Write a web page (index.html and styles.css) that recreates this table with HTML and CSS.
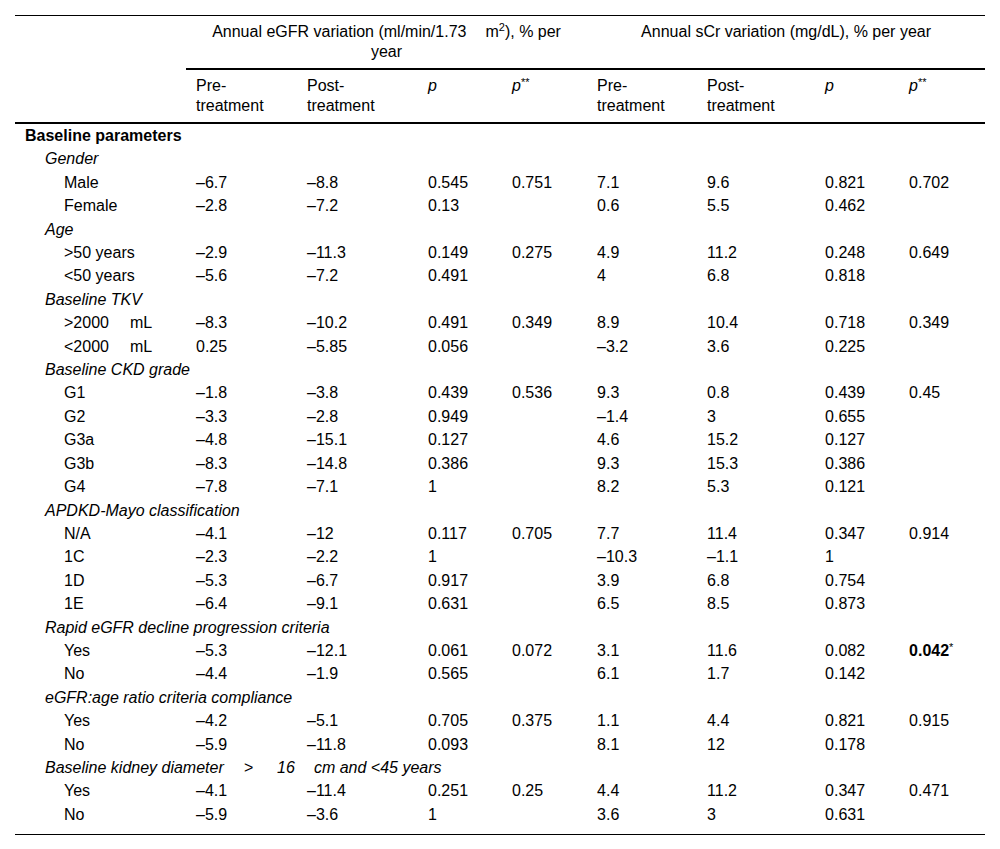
FILE: index.html
```html
<!DOCTYPE html>
<html>
<head>
<meta charset="utf-8">
<link rel="stylesheet" href="styles.css">
</head>
<body>
<table class="tbl">
  <colgroup>
    <col class="c-label"><col class="c1"><col class="c2"><col class="c3"><col class="c4"><col class="c5"><col class="c6"><col class="c7"><col class="c8">
  </colgroup>
  <thead>
    <tr class="hrow1">
      <th rowspan="2" class="blank"></th>
      <th colspan="4" class="grp">Annual eGFR variation (ml/min/1.73<span class="gap-h"></span>m<sup>2</sup>), % per<br>year</th>
      <th colspan="4" class="grp">Annual sCr variation (mg/dL), % per year</th>
    </tr>
    <tr class="hrow2">
      <th>Pre-<br>treatment</th>
      <th>Post-<br>treatment</th>
      <th><i>p</i></th>
      <th><i>p</i><sup class="ast">**</sup></th>
      <th>Pre-<br>treatment</th>
      <th>Post-<br>treatment</th>
      <th><i>p</i></th>
      <th><i>p</i><sup class="ast">**</sup></th>
    </tr>
  </thead>
  <tbody>
    <tr><td class="sec" colspan="9">Baseline parameters</td></tr>
    <tr><td class="grpl" colspan="9">Gender</td></tr>
    <tr><td class="item">Male</td><td>–6.7</td><td>–8.8</td><td>0.545</td><td>0.751</td><td>7.1</td><td>9.6</td><td>0.821</td><td>0.702</td></tr>
    <tr><td class="item">Female</td><td>–2.8</td><td>–7.2</td><td>0.13</td><td></td><td>0.6</td><td>5.5</td><td>0.462</td><td></td></tr>
    <tr><td class="grpl" colspan="9">Age</td></tr>
    <tr><td class="item">&gt;50 years</td><td>–2.9</td><td>–11.3</td><td>0.149</td><td>0.275</td><td>4.9</td><td>11.2</td><td>0.248</td><td>0.649</td></tr>
    <tr><td class="item">&lt;50 years</td><td>–5.6</td><td>–7.2</td><td>0.491</td><td></td><td>4</td><td>6.8</td><td>0.818</td><td></td></tr>
    <tr><td class="grpl" colspan="9">Baseline TKV</td></tr>
    <tr><td class="item">&gt;2000<span class="gap-ml"></span>mL</td><td>–8.3</td><td>–10.2</td><td>0.491</td><td>0.349</td><td>8.9</td><td>10.4</td><td>0.718</td><td>0.349</td></tr>
    <tr><td class="item">&lt;2000<span class="gap-ml"></span>mL</td><td>0.25</td><td>–5.85</td><td>0.056</td><td></td><td>–3.2</td><td>3.6</td><td>0.225</td><td></td></tr>
    <tr><td class="grpl" colspan="9">Baseline CKD grade</td></tr>
    <tr><td class="item">G1</td><td>–1.8</td><td>–3.8</td><td>0.439</td><td>0.536</td><td>9.3</td><td>0.8</td><td>0.439</td><td>0.45</td></tr>
    <tr><td class="item">G2</td><td>–3.3</td><td>–2.8</td><td>0.949</td><td></td><td>–1.4</td><td>3</td><td>0.655</td><td></td></tr>
    <tr><td class="item">G3a</td><td>–4.8</td><td>–15.1</td><td>0.127</td><td></td><td>4.6</td><td>15.2</td><td>0.127</td><td></td></tr>
    <tr><td class="item">G3b</td><td>–8.3</td><td>–14.8</td><td>0.386</td><td></td><td>9.3</td><td>15.3</td><td>0.386</td><td></td></tr>
    <tr><td class="item">G4</td><td>–7.8</td><td>–7.1</td><td>1</td><td></td><td>8.2</td><td>5.3</td><td>0.121</td><td></td></tr>
    <tr><td class="grpl" colspan="9">APDKD-Mayo classification</td></tr>
    <tr><td class="item">N/A</td><td>–4.1</td><td>–12</td><td>0.117</td><td>0.705</td><td>7.7</td><td>11.4</td><td>0.347</td><td>0.914</td></tr>
    <tr><td class="item">1C</td><td>–2.3</td><td>–2.2</td><td>1</td><td></td><td>–10.3</td><td>–1.1</td><td>1</td><td></td></tr>
    <tr><td class="item">1D</td><td>–5.3</td><td>–6.7</td><td>0.917</td><td></td><td>3.9</td><td>6.8</td><td>0.754</td><td></td></tr>
    <tr><td class="item">1E</td><td>–6.4</td><td>–9.1</td><td>0.631</td><td></td><td>6.5</td><td>8.5</td><td>0.873</td><td></td></tr>
    <tr><td class="grpl" colspan="9">Rapid eGFR decline progression criteria</td></tr>
    <tr><td class="item">Yes</td><td>–5.3</td><td>–12.1</td><td>0.061</td><td>0.072</td><td>3.1</td><td>11.6</td><td>0.082</td><td><b>0.042</b><sup class="ast">*</sup></td></tr>
    <tr><td class="item">No</td><td>–4.4</td><td>–1.9</td><td>0.565</td><td></td><td>6.1</td><td>1.7</td><td>0.142</td><td></td></tr>
    <tr><td class="grpl" colspan="9">eGFR:age ratio criteria compliance</td></tr>
    <tr><td class="item">Yes</td><td>–4.2</td><td>–5.1</td><td>0.705</td><td>0.375</td><td>1.1</td><td>4.4</td><td>0.821</td><td>0.915</td></tr>
    <tr><td class="item">No</td><td>–5.9</td><td>–11.8</td><td>0.093</td><td></td><td>8.1</td><td>12</td><td>0.178</td><td></td></tr>
    <tr><td class="grpl" colspan="9">Baseline kidney diameter<span class="gap-a"></span>&gt;<span class="gap-b"></span>16<span class="gap-c"></span>cm and &lt;45 years</td></tr>
    <tr><td class="item">Yes</td><td>–4.1</td><td>–11.4</td><td>0.251</td><td>0.25</td><td>4.4</td><td>11.2</td><td>0.347</td><td>0.471</td></tr>
    <tr class="last"><td class="item">No</td><td>–5.9</td><td>–3.6</td><td>1</td><td></td><td>3.6</td><td>3</td><td>0.631</td><td></td></tr>
  </tbody>
</table>
</body>
</html>
```

FILE: styles.css
```css
html, body {
  margin: 0;
  padding: 0;
  background: #fff;
}
body {
  font-family: "Liberation Sans", Arial, sans-serif;
  font-size: 16px;
  color: #000;
}
.tbl {
  margin: 15px 0 0 15px;
  width: 970px;
  border-collapse: collapse;
  table-layout: fixed;
  border-top: 1px solid #000;
  border-bottom: 1px solid #000;
}
.c-label { width: 171px; }
.c1 { width: 111px; }
.c2 { width: 121px; }
.c3 { width: 84px; }
.c4 { width: 85px; }
.c5 { width: 110px; }
.c6 { width: 118px; }
.c7 { width: 84px; }
.c8 { width: 86px; }

th {
  font-weight: normal;
  text-align: left;
  vertical-align: top;
  line-height: 20px;
  padding: 6px 10px;
}
.hrow1 th.grp {
  text-align: center;
  border-bottom: 2px solid #000;
}
.hrow2 th, th.blank {
  border-bottom: 2px solid #000;
}
td {
  padding: 2px 10px;
  line-height: 19.4px;
  vertical-align: top;
  white-space: nowrap;
}
td.sec {
  font-weight: bold;
}
td.grpl {
  font-style: italic;
  padding-left: 30px;
}
td.item {
  padding-left: 49px;
}
tr.last td {
  padding-bottom: 10px;
}
sup {
  font-size: 11px;
  line-height: 0;
  vertical-align: 6px;
}
sup.ast {
  font-size: 11px;
  vertical-align: 5px;
}
b + sup {
  font-weight: normal;
}
.gap-h { display: inline-block; width: 19px; }
.gap-ml { display: inline-block; width: 21px; }
.gap-a { display: inline-block; width: 20px; }
.gap-b { display: inline-block; width: 24px; }
.gap-c { display: inline-block; width: 19px; }
```
